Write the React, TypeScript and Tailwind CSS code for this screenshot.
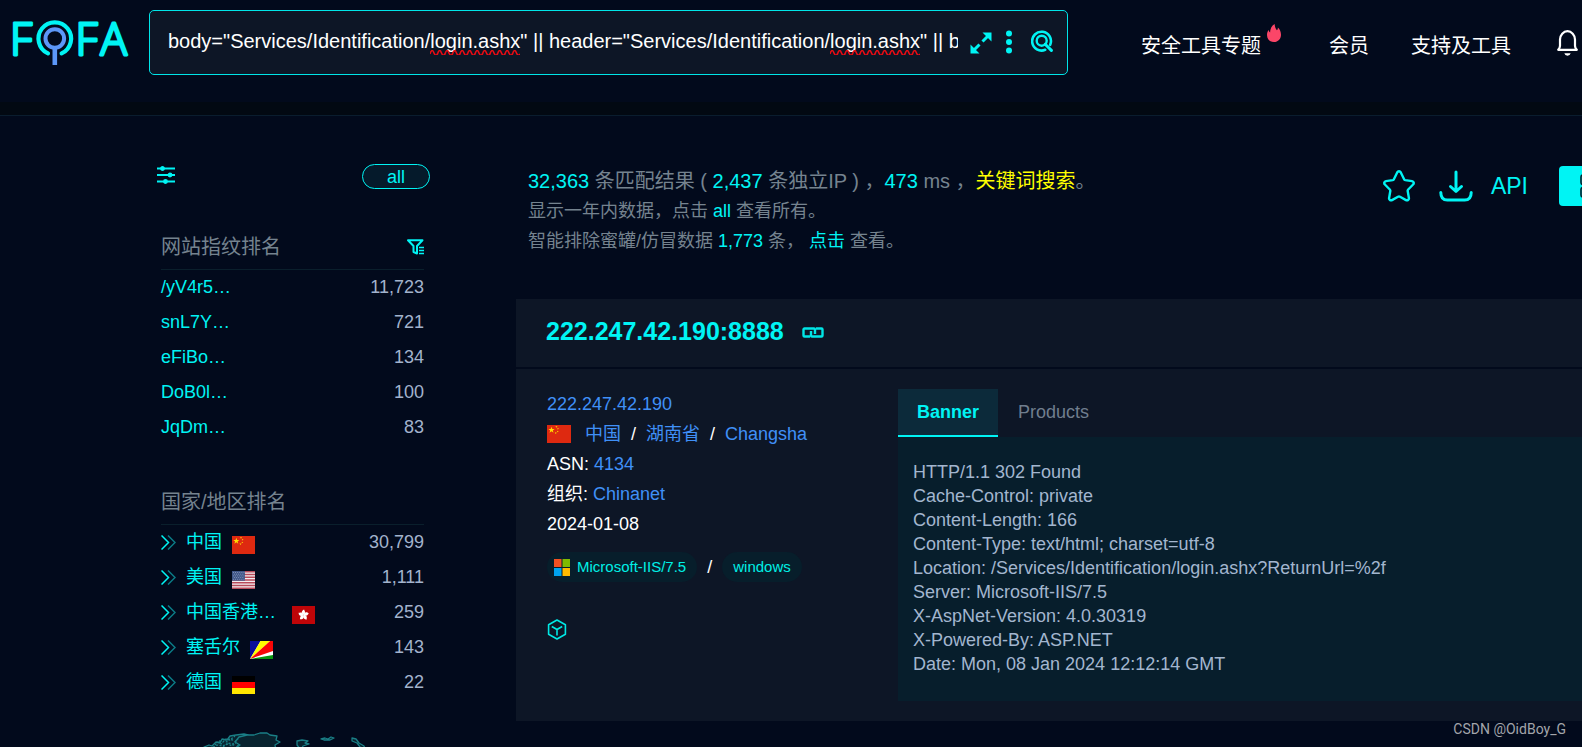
import React from "react";

const fingerprints = [
  { name: "/yV4r5…", count: "11,723" },
  { name: "snL7Y…", count: "721" },
  { name: "eFiBo…", count: "134" },
  { name: "DoB0l…", count: "100" },
  { name: "JqDm…", count: "83" },
];

const countries = [
  { name: "中国", count: "30,799", flag: "cn", width: "" },
  { name: "美国", count: "1,111", flag: "us", width: "" },
  { name: "中国香港…", count: "259", flag: "hk", width: "w-24" },
  { name: "塞舌尔", count: "143", flag: "sc", width: "" },
  { name: "德国", count: "22", flag: "de", width: "" },
];

const banner = [
  "HTTP/1.1 302 Found",
  "Cache-Control: private",
  "Content-Length: 166",
  "Content-Type: text/html; charset=utf-8",
  "Location: /Services/Identification/login.ashx?ReturnUrl=%2f",
  "Server: Microsoft-IIS/7.5",
  "X-AspNet-Version: 4.0.30319",
  "X-Powered-By: ASP.NET",
  "Date: Mon, 08 Jan 2024 12:12:14 GMT",
];

const query =
  'body="Services/Identification/login.ashx" || header="Services/Identification/login.ashx" || banner="Services/Identification/login.ashx"';

function Logo() {
  return (
    <svg className="overflow-visible" width="116" height="48" viewBox="0 0 116 48" role="img" aria-label="FOFA">
      <g
        className="font-['Open_Sans',sans-serif] font-light"
        fill="#00f4f4"
        stroke="#00f4f4"
        strokeWidth="2.800"
        strokeLinejoin="round"
        fontSize="44"
      >
        <text x="-2" y="36.500">F</text>
        <text x="63.500" y="36.500">F</text>
        <text x="88.500" y="36.500">A</text>
      </g>
      <path d="M36 35.4a16.3 16.3 0 1 1 13.6 0" fill="none" stroke="#00f4f4" strokeWidth="4.200" strokeLinecap="round" />
      <circle cx="42.8" cy="20.5" r="9.3" fill="none" stroke="#5c97f8" strokeWidth="4" />
      <path d="M42.8 30v17" stroke="#5c97f8" strokeWidth="4.6" />
    </svg>
  );
}

function Squiggle({ className }: { className: string }) {
  return (
    <svg className={className} width="90" height="5" viewBox="0 0 90 5" aria-hidden="true">
      <path
        d={"M0 4" + Array.from({ length: 12 }, () => "q1.9 -6 3.75 -1.5t3.75 1.5").join("")}
        fill="none"
        stroke="#e80c14"
        strokeWidth="1.600"
      />
    </svg>
  );
}

function Flame() {
  return (
    <svg width="14" height="18" viewBox="0 0 14 18" fill="#fb4668" aria-hidden="true">
      <path d="M7.6 0c.3 2.400.6 4.200 2.300 6.200C10.700 5.600 10.900 4.600 10.900 3.500 13 5.500 14 8 14 10.700 14 15 11 18 7 18S0 15 0 10.900C0 9 .6 7.300 1.600 6c.2 1.200.7 2 1.500 2.500C3.200 5 4.500 1.500 7.600 0z" />
    </svg>
  );
}

function Flag({ code, width = 23 }: { code: string; width?: number }) {
  return (
    <svg className="shrink-0" width={width} height="18" viewBox="0 0 24 18" preserveAspectRatio="none" aria-hidden="true">
      {code === "cn" && (
        <>
          <path fill="#de2910" d="M0 0h24v18H0z" />
          <path fill="#ffde00" d="M4.500 1.800l.8 2.200h2.300L5.800 5.400l.7 2.300-2-1.400-2 1.400.7-2.300L1.400 4h2.300z" />
          <path fill="#ffde00" d="M8.500 1l2 .4-1.200 1.300zM10.500 3l1.600.8-1.700.8zM10.300 5.700l1.500.9-1.700.6zM8 7.200l1.900.6-1.400 1.100z" />
        </>
      )}
      {code === "us" && (
        <>
          <path fill="#f3eef0" d="M0 0h24v18H0z" />
          <path
            stroke="#b94a5a"
            strokeWidth="1.400"
            d="M0 .7h24M0 3.500h24M0 6.200h24M0 9h24M0 11.800h24M0 14.500h24M0 17.300h24"
          />
          <path fill="#3f5688" d="M0 0h13.500v9.700H0z" />
          <path stroke="#8b9abd" strokeWidth=".9" strokeDasharray="1 1.200" d="M1 1.500h12M2 3.200h11M1 4.900h12M2 6.600h11M1 8.300h12" />
        </>
      )}
      {code === "hk" && (
        <>
          <path fill="#bf0508" d="M0 0h24v18H0z" />
          <g fill="#fff">
            {[0, 72, 144, 216, 288].map((deg) => (
              <path key={deg} transform={`rotate(${deg} 12 9)`} d="M12 9c-2.600-1.300-2.400-4.500.6-5.600.300 1.200 1.500 2 .9 3.500-.3.900-.9 1.300-1.500 2.100z" />
            ))}
          </g>
        </>
      )}
      {code === "sc" && (
        <>
          <path fill="#fff" d="M0 0h24v18H0z" />
          <path fill="#0a0f9a" d="M0 18V0h11z" />
          <path fill="#ffff00" d="M0 18L11 0h10z" />
          <path fill="#f80606" d="M0 18L21 0h3v10z" />
          <path fill="#0a9510" d="M0 18l24-4v4z" />
        </>
      )}
      {code === "de" && (
        <>
          <path fill="#000" d="M0 0h24v6H0z" />
          <path fill="#f00" d="M0 6h24v6H0z" />
          <path fill="#ffe600" d="M0 12h24v6H0z" />
        </>
      )}
    </svg>
  );
}

function Header() {
  return (
    <header>
      <div className="flex items-start pt-2.5 pl-3 pr-1 pb-[27px]">
        <a href="#home" className="mt-2 shrink-0">
          <Logo />
        </a>
        <form className="ml-[21px] flex h-[65px] min-w-0 flex-1 items-center rounded-[5px] border border-[#00e5e8] bg-[#0d1626] pl-[18px] pr-3.5">
          <div className="relative min-w-0 flex-1 overflow-hidden">
            <input
              aria-label="search"
              type="text"
              spellCheck={false}
              defaultValue={query}
              className="block w-full pb-1 text-[20px] leading-7 text-white outline-none"
            />
            <Squiggle className="absolute left-[262px] bottom-1" />
            <Squiggle className="absolute left-[662px] bottom-1" />
          </div>
          <button type="button" aria-label="expand" className="ml-3">
            <svg width="22" height="22" viewBox="0 0 22 22" fill="#00f4f4" stroke="#00f4f4">
              <path d="M12.500 0.500h9v9z M0.500 12.500v9h9z" stroke="none" />
              <path d="M12.500 9.500l6-6M9.500 12.500l-6 6" strokeWidth="3" />
            </svg>
          </button>
          <button type="button" aria-label="more" className="ml-3.5 pb-0.5">
            <svg width="6" height="24" viewBox="0 0 6 24" fill="#00f4f4">
              <circle cx="3" cy="3.500" r="3" />
              <circle cx="3" cy="12" r="3" />
              <circle cx="3" cy="20.500" r="3" />
            </svg>
          </button>
          <button type="submit" aria-label="submit" className="ml-[19px] pb-1">
            <svg width="22" height="22" viewBox="0 0 22 22" fill="none" stroke="#00f4f4" strokeLinecap="round">
              <path d="M14.200 19.800A9.400 9.400 0 1 1 19.200 14.800" strokeWidth="2.600" />
              <circle cx="10.700" cy="10.700" r="5" strokeWidth="2.400" />
              <path d="M14.200 14.200l6.200 6.200" strokeWidth="3" />
            </svg>
          </button>
        </form>
        <nav className="ml-[73px] flex shrink-0 gap-[42px] pt-5 text-[20px] leading-8 text-white">
          <a href="#tools" className="flex gap-1.5 pr-1.5">
            安全工具专题
            <span className="-mt-1.5">
              <Flame />
            </span>
          </a>
          <a href="#vip">会员</a>
          <a href="#support">支持及工具</a>
          <button type="button" aria-label="notifications" className="ml-1 flex">
            <svg width="21" height="27" viewBox="0 0 21 27" fill="none" stroke="#fff" strokeWidth="2.200" strokeLinejoin="round">
              <path d="M1.200 19.800c1-1 1.800-2.300 1.800-4V9.500C3 5 6.500 1.200 10.500 1.200S18 5 18 9.500v6.300c0 1.700.8 3 1.800 4z" />
              <path d="M7.300 23.200h6.400a3.300 3.300 0 0 1-6.400 0z" fill="#fff" stroke="none" />
            </svg>
          </button>
        </nav>
      </div>
      <div className="h-3.5 border-b border-[#0a1d2e] bg-[#020912]" />
    </header>
  );
}

function Heading({ children, icon }: { children: React.ReactNode; icon?: React.ReactNode }) {
  return (
    <div className="flex items-center justify-between border-b border-[#0a1f2c] pb-[5px]">
      <h2 className="text-[20px] leading-[34px] text-[#75838f]">{children}</h2>
      {icon}
    </div>
  );
}

function Sidebar() {
  return (
    <aside className="w-[273px] shrink-0 pt-12 text-[18px]">
      <div className="flex h-[26px] items-start justify-between">
        <button type="button" aria-label="filters" className="pt-0.5">
          <svg width="18" height="18" viewBox="0 0 18 18" fill="#00f4f4" stroke="#00f4f4" strokeWidth="1.800">
            <path d="M0 2.500h18M0 9h18M0 15.500h18" />
            <circle cx="5.500" cy="2.500" r="1.500" />
            <circle cx="13" cy="9" r="1.500" />
            <circle cx="8.500" cy="15.500" r="1.500" />
          </svg>
        </button>
        <button type="button" className="h-[25px] w-[68px] rounded-full border border-[#00f4f4] bg-[#051a2b] leading-[22px] text-[#00f4f4]">
          all
        </button>
      </div>

      <section className="mt-10 pl-1 pr-1.5">
        <Heading
          icon={
            <button type="button" aria-label="filter">
              <svg width="17" height="16" viewBox="0 0 17 16" fill="none" stroke="#00f4f4" strokeWidth="2">
                <path d="M1 1.200h14.500L10 7v7.500L6.500 13V7z" strokeLinejoin="round" />
                <path d="M12 8.500h5M12 11.500h5M12 14.500h5" strokeWidth="1.600" />
              </svg>
            </button>
          }
        >
          网站指纹排名
        </Heading>
        <ul>
          {fingerprints.map((item) => (
            <li key={item.name} className="flex h-[35px] items-center justify-between">
              <a href="#fingerprint" className="text-[#00f4f4]">{item.name}</a>
              <span className="text-[#a3b3cd]">{item.count}</span>
            </li>
          ))}
        </ul>
      </section>

      <section className="mt-10 pl-1 pr-1.5">
        <Heading>国家/地区排名</Heading>
        <ul>
          {countries.map((item) => (
            <li key={item.flag} className="flex h-[35px] items-center">
              <svg width="15" height="15" viewBox="0 0 15 15" fill="none" strokeWidth="1.500" aria-hidden="true">
                <path d="M.5.5l7 7-7 7" stroke="#00f4f4" />
                <path d="M7 .5l7 7-7 7" stroke="#0b7b85" />
              </svg>
              <a href="#country" className={`mx-2.5 text-[#00f4f4] ${item.width}`}>{item.name}</a>
              <span className="mt-1">
                <Flag code={item.flag} />
              </span>
              <span className="ml-auto text-[#a3b3cd]">{item.count}</span>
            </li>
          ))}
        </ul>
        <svg className="ml-[42px] mt-8" width="164" height="60" viewBox="0 0 164 60" fill="#08232f" stroke="#1a7f86" strokeWidth="1.300" strokeLinejoin="round" aria-hidden="true">
          <path d="M1 15l5-2 3 1 4-4 4 1 2-4 5 1 3-4 6-1 8-1 4 1-5 3 3 2-6 3-4 5-5 2-7 8-14 6z" />
          <path d="M36 5l8-2 7 0 6-2 7 0 3 2 7 1-1 4 4 2-5 3 1 6-6 9-10 5-5 10-7-4-4-12-3-8-5-3 4-3-5-3z" />
          <path d="M12 13l3-3 3 2 3-3 3 1 2-3 4 1M20 15l5-4 5 1 5-5M16 9l4 1 3-3 4 1 5-4M10 15l5-2 4 1 6-2 4 2 4-3" fill="none" strokeDasharray="2 1.500" />
          <path d="M94 9l5-1 6 1-3 2 4 1-6 2-2 4-4-5z" />
          <path d="M118 7l4-1 3 1 3-2 3 1-4 2-6 0z" />
          <path d="M149 6l4 1 3 4 5 3 1 3-5-2-3-4-5-2z" />
        </svg>
      </section>
    </aside>
  );
}

function Summary() {
  return (
    <div className="flex items-start justify-between pl-3">
      <div className="text-[18px] leading-[30px] text-[#75838f]">
        <p className="text-[20px]">
          <span className="text-[#00f4f4]">32,363</span> 条匹配结果 ( <span className="text-[#00f4f4]">2,437</span> 条独立IP ) ，
          <span className="text-[#00f4f4]">473</span> ms ，<a href="#keyword" className="text-[#ffff00]">关键词搜索</a>。
        </p>
        <p>
          显示一年内数据，点击 <a href="#all" className="text-[#00f4f4]">all</a> 查看所有。
        </p>
        <p>
          智能排除蜜罐/仿冒数据 <span className="text-[#00f4f4]">1,773</span> 条， <a href="#show" className="text-[#00f4f4]">点击</a> 查看。
        </p>
      </div>
      <div className="-mr-9 flex shrink-0 items-center text-[#00f4f4]">
        <button type="button" aria-label="favourite">
          <svg width="32" height="32" viewBox="0 0 32 32" fill="none" stroke="#00f4f4" strokeWidth="2.400" strokeLinejoin="round">
            <path d="M14.200 2.400c.8-1.500 2.800-1.500 3.600 0l3.300 6.800c.2.500.7.800 1.200.9l6.700 1c1.700.3 2.300 2.200 1.100 3.400l-4.900 5c-.4.400-.6 1-.5 1.500l1.200 7c.3 1.600-1.400 2.800-2.900 2.100l-6-3.300c-.6-.3-1.400-.3-2 0l-6 3.300c-1.500.7-3.200-.5-2.900-2.100l1.200-7c.1-.5-.1-1.100-.5-1.500l-4.900-5c-1.200-1.200-.6-3.100 1.100-3.400l6.700-1c.5-.1 1-.4 1.200-.9z" />
          </svg>
        </button>
        <button type="button" aria-label="download" className="ml-6">
          <svg width="34" height="32" viewBox="0 0 34 32" fill="none" stroke="#00f4f4" strokeWidth="3" strokeLinecap="round" strokeLinejoin="round">
            <path d="M17 2v19M11.500 16.500l5.500 5 5.500-5" />
            <path d="M1.800 22.500c0 5 2 7.500 6.500 7.500h17.400c4.500 0 6.500-2.500 6.500-7.500" />
          </svg>
        </button>
        <a href="#api" className="ml-[18px] text-[23px] leading-8">API</a>
        <button type="button" aria-label="view" className="ml-[31px] flex h-10 w-[59px] items-center rounded-[4px] bg-[#00f4f4] pl-[21px]">
          <svg width="24" height="24" viewBox="0 0 24 24" fill="none" stroke="#04202c" strokeWidth="1.600">
            <rect x="1" y="1" width="9.500" height="9.500" rx="2" />
            <rect x="1" y="13.500" width="9.500" height="9.500" rx="2" />
            <rect x="13.500" y="1" width="9.500" height="9.500" rx="2" />
            <rect x="13.500" y="13.500" width="9.500" height="9.500" rx="2" />
          </svg>
        </button>
      </div>
    </div>
  );
}

function HostInfo() {
  return (
    <div className="w-[382px] shrink-0 pl-[31px] text-[18px] leading-[30px] text-white">
      <a href="#ip" className="block text-[#4090f7]">222.247.42.190</a>
      <div className="flex items-center">
        <Flag code="cn" width={24} />
        <a href="#cn" className="ml-3.5 text-[#4090f7]">中国</a>
        <span className="mx-2.5">/</span>
        <a href="#hunan" className="text-[#4090f7]">湖南省</a>
        <span className="mx-2.5">/</span>
        <a href="#changsha" className="text-[#4090f7]">Changsha</a>
      </div>
      <p>
        ASN: <a href="#asn" className="text-[#4090f7]">4134</a>
      </p>
      <p>
        组织: <a href="#org" className="text-[#4090f7]">Chinanet</a>
      </p>
      <p>2024-01-08</p>
      <div className="mt-[13px] flex items-center">
        <a href="#iis" className="flex items-center gap-[7px] rounded-full bg-[#071e2b] pl-[7px] pr-[11px] text-[15px] text-[#00f0e6]">
          <svg width="16" height="17" viewBox="0 0 16 17" aria-hidden="true">
            <path fill="#f25022" d="M0 0h7.500v8H0z" />
            <path fill="#7fba00" d="M8.500 0H16v8H8.500z" />
            <path fill="#00a4ef" d="M0 9h7.500v8H0z" />
            <path fill="#ffb900" d="M8.500 9H16v8H8.500z" />
          </svg>
          Microsoft-IIS/7.5
        </a>
        <span className="mx-2.5">/</span>
        <a href="#windows" className="rounded-full bg-[#071e2b] px-[11px] text-[15px] text-[#00f0e6]">windows</a>
      </div>
      <button type="button" aria-label="assets" className="mt-[37px] block">
        <svg width="20" height="21" viewBox="0 0 20 21" fill="none" stroke="#00e8e4" strokeWidth="1.600" strokeLinejoin="round">
          <path d="M10 1l8.400 4.800v9.400L10 20l-8.400-4.800V5.800z" />
          <path d="M4.800 7.500L10 10.500l5.200-3M10 10.500v6" />
        </svg>
      </button>
    </div>
  );
}

function ResultCard() {
  return (
    <article className="mt-[43px]">
      <div className="flex h-[68px] items-center gap-[18px] bg-[#0d1626] pb-0.5 pl-[30px]">
        <a href="#host" className="text-[25px] font-bold text-[#00f4f4]">222.247.42.190:8888</a>
        <a href="#open" aria-label="open host">
          <svg width="22" height="11" viewBox="0 0 22 11" fill="none" stroke="#00e6e6" strokeWidth="2.400" strokeLinejoin="round">
            <path d="M13 7V2.500a1 1 0 0 0-1-1H2.500a1 1 0 0 0-1 1v6a1 1 0 0 0 1 1H8" />
            <path d="M9 4v4.500a1 1 0 0 0 1 1h9.500a1 1 0 0 0 1-1v-6a1 1 0 0 0-1-1H14" />
          </svg>
        </a>
      </div>
      <div className="mt-0.5 flex bg-[#0d1626] py-5">
        <HostInfo />
        <div className="min-w-0 flex-1 text-[18px]">
          <div role="tablist" className="flex">
            <button type="button" role="tab" aria-selected="true" className="h-12 border-b-2 border-[#00f4f4] bg-[#0c2a3a] px-[19px] font-bold text-[#00f4f4]">
              Banner
            </button>
            <button type="button" role="tab" aria-selected="false" className="h-12 px-5 pb-0.5 text-[#707e8e]">
              Products
            </button>
          </div>
          <div role="tabpanel" className="bg-[#071e2c] px-[15px] pt-[23px] pb-[25px] leading-6 text-[#a3b6cf]">
            {banner.map((line) => (
              <p key={line}>{line}</p>
            ))}
          </div>
        </div>
      </div>
    </article>
  );
}

export default function App() {
  return (
    <div className="relative h-screen overflow-hidden bg-[#020a1c] font-['Liberation_Sans','Noto_Sans_CJK_SC',sans-serif]">
      <Header />
      <div className="flex pl-[157px]">
        <Sidebar />
        <main className="ml-[86px] min-w-0 flex-1 pt-[50px]">
          <Summary />
          <ResultCard />
        </main>
      </div>
      <span className="absolute right-4 bottom-2 font-[Roboto,sans-serif] text-[14px] leading-5 text-[#a2a5ab]">CSDN @OidBoy_G</span>
    </div>
  );
}
